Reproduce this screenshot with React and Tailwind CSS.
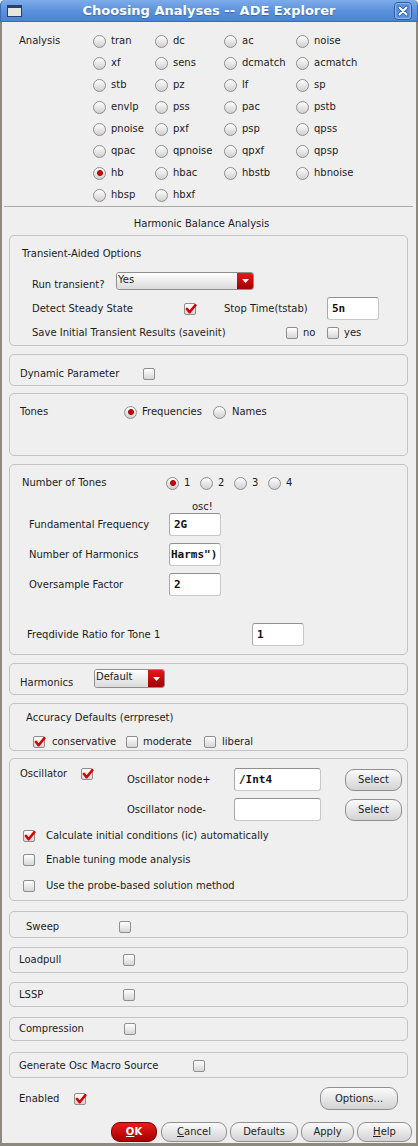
import React from "react";

const Radio = ({ checked }) => (
  <span className="flex w-[13px] h-[13px] shrink-0 items-center justify-center rounded-full border border-[#8e8e8e] bg-linear-to-b from-[#ffffff] to-[#d0d0d0]">
    {checked && <span className="w-[6px] h-[6px] rounded-full bg-[#e00000] border border-[#8a0000]" />}
  </span>
);

const Check = ({ checked }) => (
  <span className="relative flex w-[12px] h-[12px] shrink-0 rounded-[2px] border border-[#8e8e8e] bg-linear-to-b from-[#ffffff] to-[#d6d6d6]">
    {checked && (
      <svg className="absolute left-[0px] top-[-1px]" width="12" height="12" viewBox="0 0 12 12">
        <path d="M2 6 L4.6 9.2 L10.3 2.2" fill="none" stroke="#d40000" strokeWidth="2.6" strokeLinecap="round" strokeLinejoin="round" />
      </svg>
    )}
  </span>
);

const Btn = ({ children, className }) => (
  <div className={"flex items-center justify-center rounded-[9px] border border-[#8f8f8f] bg-linear-to-b from-[#fbfbfb] to-[#d3d3d3] text-[#1e1e1e] " + className}>
    {children}
  </div>
);

const Combo = ({ value, className }) => (
  <div className={"flex rounded-[3px] border border-[#8e8e8e] overflow-hidden " + className}>
    <div className="flex-1 bg-linear-to-b from-[#ffffff] to-[#dadada] pl-[1px] leading-[13px]">{value}</div>
    <div className="w-[16px] bg-linear-to-b from-[#e21a1a] to-[#a40000] flex items-center justify-center">
      <svg width="7" height="4" viewBox="0 0 7 4">
        <path d="M0 0 H7 L3.5 4 Z" fill="#ffffff" />
      </svg>
    </div>
  </div>
);

const Field = ({ value, className }) => (
  <div className={"flex items-center h-[23px] bg-white border border-[#c8c8c8] border-t-[#8f8f8f] border-l-[#a8a8a8] rounded-[3px] font-['DejaVu_Sans_Mono',monospace] font-semibold text-[11px] text-[#111] overflow-hidden whitespace-nowrap " + className}>
    {value}
  </div>
);

const Group = ({ className, children }) => (
  <div className={"ml-[7px] w-[399px] rounded-[5px] border border-[#c3c3c3] " + className}>{children}</div>
);

const rows = [
  ["tran", "dc", "ac", "noise"],
  ["xf", "sens", "dcmatch", "acmatch"],
  ["stb", "pz", "lf", "sp"],
  ["envlp", "pss", "pac", "pstb"],
  ["pnoise", "pxf", "psp", "qpss"],
  ["qpac", "qpnoise", "qpxf", "qpsp"],
  ["hb", "hbac", "hbstb", "hbnoise"],
  ["hbsp", "hbxf"],
];
const colW = ["w-[62px]", "w-[69px]", "w-[72px]", "w-[80px]"];

function TitleBar() {
  return (
    <div className="h-[22px] flex items-center rounded-t-[5px] bg-linear-to-b from-[#7dacea] via-[#5c92dc] to-[#4c83d3] border-x border-b border-[#3b6db6]">
      <div className="w-[30px] flex pl-[6px]">
        <div className="w-[15px] h-[12px] border border-[#23406e] border-t-[3px] bg-[#e6e6df]" />
      </div>
      <div className="flex-1 text-center text-white font-bold text-[13px] leading-[16px] [text-shadow:0_1px_1px_#3a68a8]">
        Choosing Analyses -- ADE Explorer
      </div>
      <div className="w-[30px] flex justify-end pr-[5px]">
        <svg width="18" height="18" viewBox="0 0 18 18">
          <rect x="0.5" y="0.5" width="17" height="17" rx="3.5" fill="#5d93dc" stroke="#2d5a9c" />
          <rect x="1.5" y="1.5" width="15" height="15" rx="2.5" fill="none" stroke="#8cb6ec" />
          <path d="M5.5 5.5 L12.5 12.5 M12.5 5.5 L5.5 12.5" stroke="#2d5a9c" strokeWidth="3.8" strokeLinecap="round" />
          <path d="M5.5 5.5 L12.5 12.5 M12.5 5.5 L5.5 12.5" stroke="#ffffff" strokeWidth="2" strokeLinecap="round" />
        </svg>
      </div>
    </div>
  );
}

export default function App() {
  return (
    <div className="w-[418px] h-[1146px] flex flex-col bg-[#efefef] text-[10px] leading-[12px] text-[#1c1c1c] font-['DejaVu_Sans',sans-serif] overflow-hidden">
      <TitleBar />
      <div className="flex-1 flex flex-col border-x-2 border-b-[3px] border-[#8d897f]">
        {/* Analysis radios */}
        <div className="flex pl-[17px] mt-[8px]">
          <div className="w-[74px] h-[22px] flex items-center">Analysis</div>
          <div className="flex flex-col">
            {rows.map((r, ri) => (
              <div key={ri} className="flex h-[22px] items-center">
                {r.map((n, i) => (
                  <div key={n} className={"flex items-center gap-[5px] " + colW[i]}>
                    <Radio checked={n === "hb"} />
                    <span>{n}</span>
                  </div>
                ))}
              </div>
            ))}
          </div>
        </div>
        <div className="ml-[2px] mr-[3px] h-px bg-[#a9a9a9]" />
        <div className="mt-[7px] h-[20px] flex items-center justify-center pr-[15px]">Harmonic Balance Analysis</div>

        {/* Transient-Aided Options */}
        <Group className="mt-px h-[111px] pt-[10px]">
          <div className="h-[16px] leading-[16px] pl-[12px]">Transient-Aided Options</div>
          <div className="mt-[10px] flex items-start h-[18px] pl-[22px]">
            <span className="w-[84px] pt-[7px]">Run transient?</span>
            <Combo value="Yes" className="w-[138px] h-[18px]" />
          </div>
          <div className="mt-[7px] flex items-center h-[23px] pl-[22px]">
            <span className="w-[152px]">Detect Steady State</span>
            <Check checked />
            <span className="ml-[28px] w-[103px]">Stop Time(tstab)</span>
            <Field value="5n" className="w-[52px] pl-[4px]" />
          </div>
          <div className="mt-[6px] flex items-center h-[14px] pl-[22px]">
            <span className="w-[254px]">Save Initial Transient Results (saveinit)</span>
            <Check />
            <span className="ml-[5px] w-[24px]">no</span>
            <Check />
            <span className="ml-[5px]">yes</span>
          </div>
        </Group>

        {/* Dynamic Parameter */}
        <Group className="mt-[8px] h-[32px] pt-[7px] pl-[10px] flex items-center">
          <span className="w-[123px]">Dynamic Parameter</span>
          <Check />
        </Group>

        {/* Tones */}
        <Group className="mt-[7px] h-[63px] pt-[11px] pl-[10px]">
          <div className="flex items-center h-[14px]">
            <span className="w-[104px]">Tones</span>
            <Radio checked />
            <span className="ml-[5px] w-[71px]">Frequencies</span>
            <Radio />
            <span className="ml-[6px]">Names</span>
          </div>
        </Group>

        {/* Number of Tones */}
        <Group className="mt-[8px] h-[191px] pt-[11px]">
          <div className="flex items-center h-[14px] pl-[12px]">
            <span className="w-[144px]">Number of Tones</span>
            {["1", "2", "3", "4"].map((d) => (
              <div key={d} className="w-[34px] flex items-center gap-[5px]">
                <Radio checked={d === "1"} />
                <span>{d}</span>
              </div>
            ))}
          </div>
          <div className="mt-[11px] h-[12px] pl-[182px]">osc!</div>
          <div className="flex items-center h-[23px] pl-[19px]">
            <span className="w-[140px]">Fundamental Frequency</span>
            <Field value="2G" className="w-[52px] pl-[4px]" />
          </div>
          <div className="mt-[7px] flex items-center h-[23px] pl-[19px]">
            <span className="w-[140px]">Number of Harmonics</span>
            <Field value={'Harms")'} className="w-[52px] pl-[1px]" />
          </div>
          <div className="mt-[7px] flex items-center h-[23px] pl-[19px]">
            <span className="w-[140px]">Oversample Factor</span>
            <Field value="2" className="w-[52px] pl-[4px]" />
          </div>
          <div className="mt-[27px] flex items-center h-[23px] pl-[17px]">
            <span className="w-[225px]">Freqdivide Ratio for Tone 1</span>
            <Field value="1" className="w-[52px] pl-[4px]" />
          </div>
        </Group>

        {/* Harmonics */}
        <Group className="mt-[8px] h-[32px] pt-[5px] pl-[10px] flex items-start">
          <span className="w-[74px] pt-[8px]">Harmonics</span>
          <Combo value="Default" className="w-[71px] h-[19px]" />
        </Group>

        {/* Accuracy */}
        <Group className="mt-[8px] h-[48px] pt-[7px]">
          <div className="h-[14px] flex items-center pl-[16px]">Accuracy Defaults (errpreset)</div>
          <div className="mt-[11px] h-[12px] flex items-center pl-[23px]">
            <Check checked />
            <span className="ml-[7px] w-[74px]">conservative</span>
            <Check />
            <span className="ml-[5px] w-[61px]">moderate</span>
            <Check />
            <span className="ml-[6px]">liberal</span>
          </div>
        </Group>

        {/* Oscillator */}
        <Group className="mt-[7px] h-[143px] pt-[9px]">
          <div className="flex items-start h-[23px] pl-[10px]">
            <span className="w-[61px] leading-[11px]">Oscillator</span>
            <Check checked />
            <span className="ml-[34px] w-[107px] self-center">Oscillator node+</span>
            <Field value="/Int4" className="w-[87px] pl-[4px]" />
            <Btn className="ml-[24px] w-[57px] h-[22px] mt-px">Select</Btn>
          </div>
          <div className="mt-[7px] flex items-center h-[23px] pl-[117px]">
            <span className="w-[107px]">Oscillator node-</span>
            <Field value="" className="w-[87px] pl-[4px]" />
            <Btn className="ml-[24px] w-[57px] h-[22px]">Select</Btn>
          </div>
          <div className="mt-[8px] h-[14px] flex items-center pl-[13px]">
            <Check checked />
            <span className="ml-[11px]">Calculate initial conditions (ic) automatically</span>
          </div>
          <div className="mt-[10px] h-[14px] flex items-center pl-[13px]">
            <Check />
            <span className="ml-[11px]">Enable tuning mode analysis</span>
          </div>
          <div className="mt-[12px] h-[14px] flex items-center pl-[13px]">
            <Check />
            <span className="ml-[11px]">Use the probe-based solution method</span>
          </div>
        </Group>

        <Group className="mt-[10px] h-[27px] pt-[4px] pl-[16px] flex items-center">
          <span className="w-[93px]">Sweep</span>
          <Check />
        </Group>
        <Group className="mt-[9px] h-[26px] pl-[9px] flex items-center">
          <span className="w-[104px]">Loadpull</span>
          <Check />
        </Group>
        <Group className="mt-[9px] h-[25px] pl-[9px] flex items-center">
          <span className="w-[104px]">LSSP</span>
          <Check />
        </Group>
        <Group className="mt-[10px] h-[24px] pl-[9px] flex items-center">
          <span className="w-[105px]">Compression</span>
          <Check />
        </Group>
        <Group className="mt-[11px] h-[26px] pt-[2px] pl-[9px] flex items-center">
          <span className="w-[174px]">Generate Osc Macro Source</span>
          <Check />
        </Group>

        {/* Enabled / Options */}
        <div className="mt-[9px] flex items-center h-[23px] pl-[17px] pr-[18px]">
          <span className="w-[55px]">Enabled</span>
          <Check checked />
          <div className="flex-1" />
          <Btn className="w-[78px] h-[23px]">Options...</Btn>
        </div>

        {/* Bottom buttons */}
        <div className="mt-[12px] flex justify-end pr-[4px] gap-[3px] h-[20px]">
          <div className="mr-px w-[46px] h-[20px] flex items-center justify-center rounded-[9px] border border-[#7a0000] bg-linear-to-b from-[#e81c1c] to-[#a80000] text-white font-bold">
            <span className="underline">O</span>K
          </div>
          <Btn className="w-[66px] h-[20px]">
            <span className="underline">C</span>ancel
          </Btn>
          <Btn className="w-[68px] h-[20px]">Defaults</Btn>
          <Btn className="w-[53px] h-[20px]">Apply</Btn>
          <Btn className="w-[55px] h-[20px]">
            <span className="underline">H</span>elp
          </Btn>
        </div>
      </div>
    </div>
  );
}
